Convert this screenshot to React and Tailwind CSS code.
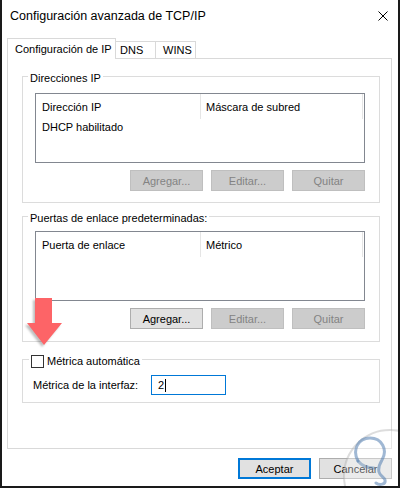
import React from 'react'

const font = { fontFamily: '"Liberation Sans", Arial, sans-serif' }

const Button = ({ children, disabled = false, primary = false, className = '' }) => {
  const tone = disabled
    ? 'bg-[#cccccc] border border-[#bfbfbf] text-[#838383]'
    : primary
      ? 'bg-[#e1e1e1] border-2 border-[#0078d7] text-black'
      : 'bg-[#e1e1e1] border border-[#adadad] text-black'
  return (
    <div className={`flex h-[21px] w-[73px] items-center justify-center ${tone} ${className}`}>
      {children}
    </div>
  )
}

const Group = ({ legend, className = '', children }) => (
  <div className={`mx-[14px] w-[358px] border border-[#dcdcdc] ${className}`}>
    {legend}
    {children}
  </div>
)

const Legend = ({ children }) => (
  <div className="-mt-[6px] ml-[5px] flex h-[14px] w-fit items-center bg-white px-[2px]">
    {children}
  </div>
)

const ListBox = ({ cols, rows = [], className = '' }) => (
  <div className={`ml-[12px] h-[70px] w-[330px] border border-[#828790] bg-white ${className}`}>
    <div className="flex h-[25px]">
      <div className="flex w-[165px] items-center border-r border-[#e5e5e5] pl-[6px]">{cols[0]}</div>
      <div className="flex w-[162px] items-center border-r border-[#e5e5e5] pl-[5px]">{cols[1]}</div>
    </div>
    {rows.map((r) => (
      <div key={r} className="flex h-[16px] items-center pl-[6px]">
        {r}
      </div>
    ))}
  </div>
)

const ButtonRow = ({ first, className = '' }) => (
  <div className={`ml-[12px] flex w-[330px] justify-end gap-[8px] ${className}`}>
    <Button disabled={!first}>Agregar...</Button>
    <Button disabled>Editar...</Button>
    <Button disabled>Quitar</Button>
  </div>
)

const Arrow = () => (
  <svg
    className="absolute left-[25px] top-[298px]"
    width="38"
    height="48"
    viewBox="0 0 38 48"
    style={{ filter: 'drop-shadow(-2px 2px 1px rgba(0,0,0,0.25))' }}
  >
    <path d="M8 0 H25 V25 H35 L17 47 L0 25 H8 Z" fill="#fd6467" />
  </svg>
)

const Watermark = () => (
  <svg className="absolute right-0 bottom-0" width="60" height="58" viewBox="0 0 60 58">
    <circle cx="52" cy="48" r="46" fill="rgba(255,255,255,0.35)" stroke="rgba(170,170,170,0.4)" strokeWidth="2" />
    <path
      d="M20 33 C14 22 20 10 32 10 C44 10 50 22 44 32 C41 37 40 40 41 44 C42 48 46 49 47 52 C48 56 42 58 38 55"
      fill="none"
      stroke="rgba(82,126,176,0.55)"
      strokeWidth="3"
      strokeLinecap="round"
    />
    <path d="M20 33 C24 38 30 40 36 40" fill="none" stroke="rgba(82,126,176,0.45)" strokeWidth="3" strokeLinecap="round" />
  </svg>
)

export default function App() {
  return (
    <div
      className="relative flex h-[488px] w-[400px] flex-col border-x-2 border-b-2 border-[#1a1a1a] bg-white text-[11px] leading-[14px] text-black"
      style={font}
    >
      <div className="flex h-[32px] items-center justify-between pl-[8px] pr-[10px]">
        <span className="text-[12.5px]">Configuración avanzada de TCP/IP</span>
        <svg width="10" height="10" viewBox="0 0 10 10">
          <path d="M0.5 0.5 L9.5 9.5 M9.5 0.5 L0.5 9.5" stroke="#000" strokeWidth="1" />
        </svg>
      </div>

      <div className="ml-[5px] mt-[6px] flex items-end">
        <div className="relative z-10 -mb-px flex h-[21px] w-[109px] items-center border-x border-t border-[#d9d9d9] bg-white pl-[7px]">
          Configuración de IP
        </div>
        <div className="flex h-[17px] w-[40px] items-center border-r border-t border-[#d9d9d9] pl-[4px]">DNS</div>
        <div className="flex h-[17px] w-[40px] items-center border-r border-t border-[#d9d9d9] pl-[7px]">WINS</div>
      </div>

      <div className="ml-[5px] flex h-[391px] w-[385px] flex-col border border-[#d9d9d9]">
        <Group className="mt-[17px] pb-[11px]" legend={<Legend>Direcciones IP</Legend>}>
          <ListBox className="mt-[8px]" cols={['Dirección IP', 'Máscara de subred']} rows={['DHCP habilitado']} />
          <ButtonRow className="mt-[7px]" />
        </Group>

        <Group className="mt-[13px] pb-[12px]" legend={<Legend>Puertas de enlace predeterminadas:</Legend>}>
          <ListBox className="mt-[6px]" cols={['Puerta de enlace', 'Métrico']} />
          <ButtonRow first className="mt-[7px]" />
        </Group>

        <Group
          className="mt-[17px] pb-[7px]"
          legend={
            <div className="-mt-[6px] ml-[6px] flex h-[14px] w-fit items-center gap-[3px] bg-white px-[2px]">
              <div className="h-[13px] w-[13px] border border-[#333333] bg-white" />
              <span>Métrica automática</span>
            </div>
          }
        >
          <div className="mt-[7px] flex items-center pl-[10px]">
            <span className="w-[118px]">Métrica de la interfaz:</span>
            <div className="flex h-[20px] w-[75px] items-center border border-[#0078d7] pl-[6px]">
              <span>2</span>
              <span className="ml-px h-[13px] w-px bg-black" />
            </div>
          </div>
        </Group>
      </div>

      <div className="mt-[9px] flex justify-end gap-[8px] pr-[6px]">
        <Button primary>Aceptar</Button>
        <Button>Cancelar</Button>
      </div>

      <Arrow />
      <Watermark />
    </div>
  )
}
